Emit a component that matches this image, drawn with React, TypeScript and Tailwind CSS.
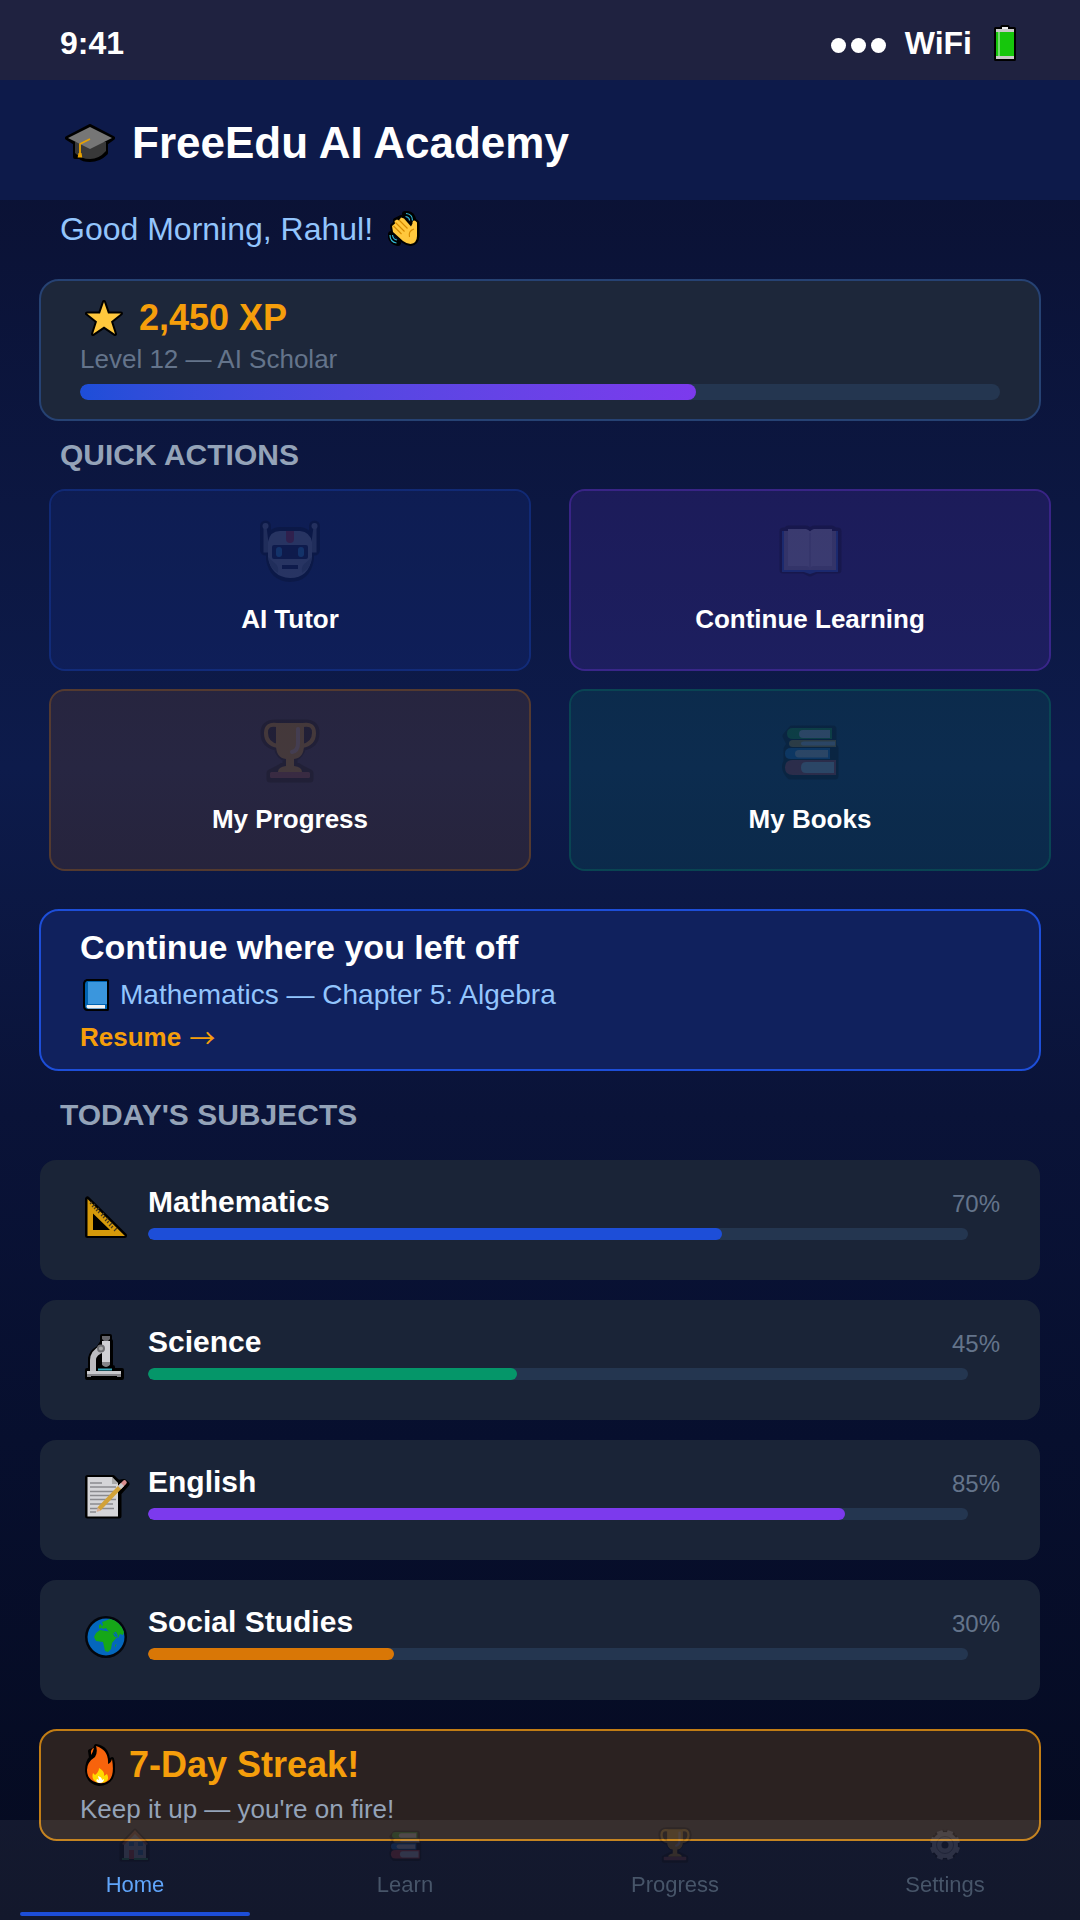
import React from "react";

type IconProps = { className?: string };

const OUT = { fill: "#000", stroke: "#000", strokeLinejoin: "round" as const };

function GraduationCap({ className }: IconProps) {
  return (
    <svg viewBox="0 0 50 38" className={className} aria-hidden="true">
      <path {...OUT} strokeWidth="4" d="M25 2 48 14 41 19V29Q34 36 25 36 18 36 15 33H10V19L2 14Z" />
      <path d="M10 18v11q6 6 15 6t16-8V18z" fill="#383838" />
      <path d="M25 3 47 14 25 25 3 14z" fill="#767676" />
      <path d="M25 15 15 20v11" fill="none" stroke="#e8a200" strokeWidth="1.8" />
      <path d="M13.500 29h3l.8 4.500h-4.600z" fill="#e8a200" />
    </svg>
  );
}

function WavingHand({ className }: IconProps) {
  const hand =
    "M4 15 7 12.500 6.500 10 9 8.500 11 9.500 13 6.500 16 7.500 23 15.500 24.500 12.500V11Q26 8 29 11.500V25Q29 32 22.500 33 19 33 15 30L5 21Z";
  return (
    <svg viewBox="0 0 34 36" className={className} aria-hidden="true">
      <path {...OUT} strokeWidth="4" d="M4 15 7 12 7 9 9 8 13 6 16 7 22 14 25 11Q28 9 29.500 12V25Q29 32 22.500 33 19 33 15 30L5 21Z" />
      <path d="M17 3Q24 2 25.500 10M3 23Q2 30 10 32" fill="none" stroke="#000" strokeWidth="6" strokeLinecap="round" />
      <path d={hand} fill="#ffc83d" />
      <path d="m5.500 15 8 8M7.500 11.500l9 9M11 9l8.500 8.500M26 18q-6 2-4.500 8" fill="none" stroke="#d68a00" strokeWidth="1.1" />
      <path d="M18 2.500q6.500.5 6.500 7M17.500 5.500q4 .5 4 4M2 24q0 7 6.500 8M4.500 24q.5 4.500 4.500 5" fill="none" stroke="#32b8d4" strokeWidth="1.200" />
    </svg>
  );
}

function Battery({ className }: IconProps) {
  return (
    <svg viewBox="0 0 22 36" className={className} aria-hidden="true">
      <path {...OUT} strokeWidth="3" d="M7 3.500 8 1.500h6l1 2h5.500v31h-19v-31z" />
      <path d="M8 2h6v3H8z" fill="#eee" />
      <rect x="2" y="4" width="18" height="30" fill="#c8c8c8" />
      <rect x="2" y="7" width="18" height="24" fill="#16c60c" />
      <path d="M4 7h2v24H4z" fill="#74dc6e" />
    </svg>
  );
}

function Star({ className }: IconProps) {
  const d = "M19 2 23 13.500H36L26 21.500 30 34 19 26.500 8 34 12 21.500 2 13.500H15Z";
  return (
    <svg viewBox="0 0 38 37" className={className} aria-hidden="true">
      <path {...OUT} strokeWidth="4" d={d} />
      <path d={d} fill="#ffc83d" />
    </svg>
  );
}

function Robot({ className }: IconProps) {
  return (
    <svg viewBox="0 0 64 64" className={className} aria-hidden="true">
      <path {...OUT} strokeWidth="8" d="M12 30V23Q13 12 22 12H42Q51 13 52 23V40Q49 59 32 59 15 58 12 40Z" />
      <path d="M7.500 7v24M56.500 7v24" stroke="#000" strokeWidth="11" strokeLinecap="round" />
      <path d="M7 8 10 32H7zM57 8l-3 24h3z" fill="#888" stroke="#888" strokeWidth="3" />
      <circle cx="7.500" cy="7" r="3" fill="#a0a0a0" />
      <circle cx="56.500" cy="7" r="3" fill="#a0a0a0" />
      <path d="M10 23Q12 12 22 12H42Q52 13 54 23V38Q51 59 32 59 13 58 10 38Z" fill="#b4b4b4" />
      <path d="M10 38q3 3 8 7 3 3 2 9Q11 49 10 38zM54 38q-3 3-8 7-3 3-2 9 9-5 10-16z" fill="#888" />
      <path d="M28 12h8v8q0 4-4 4t-4-4z" fill="#e8312a" />
      <rect x="14" y="26" width="36" height="14" rx="2" fill="#101020" />
      <rect x="18" y="28" width="6" height="10" rx="3" fill="#32a8e4" />
      <rect x="40" y="28" width="6" height="10" rx="3" fill="#32a8e4" />
      <path d="M24 46h16v4H24z" fill="#101020" />
    </svg>
  );
}

function OpenBook({ className }: IconProps) {
  return (
    <svg viewBox="0 0 64 64" className={className} aria-hidden="true">
      <path {...OUT} strokeWidth="7" d="M5 12H8L10 10H28L32 12 36 10H54L57 12H60V51H38L32 54 26 51H5Z" />
      <path d="M4 12h56v41H38l-6 2-6-2H4z" fill="#1672d4" />
      <path d="M6 12h52v39H6z" fill="#b5b5b5" />
      <path d="M10 10h18q4 1 4 4 0-3 4-4h18v37H36q-4 0-4 4 0-4-4-4H10z" fill="#e2e2e2" />
      <path d="M32 14v37" stroke="#bbb" strokeWidth="1.500" />
    </svg>
  );
}

function Trophy({ className }: IconProps) {
  return (
    <svg viewBox="0 0 64 64" className={className} aria-hidden="true">
      <path {...OUT} strokeWidth="7" d="M18 4H46Q58 3 58 14 58 26 45 28 42 37 36 39V45L44 50 52 54V60H12V54L20 50 28 45V39Q21 37 19 28 6 26 6 14 6 4 18 4Z" />
      <path d="M19 6q-11-2-11 8 0 11 12 13M45 6q11-2 11 8 0 11-12 13" fill="none" stroke="#eba41c" strokeWidth="4" />
      <path d="M18 4h28v22q0 13-10 14v7q8 1 8 6H20q0-5 8-6v-7q-10-1-10-14z" fill="#eba41c" />
      <path d="M40 10v14q0 8-6 9" fill="none" stroke="#e8c8b0" strokeWidth="4" strokeLinecap="round" />
      <rect x="12" y="53" width="40" height="6" rx="1.500" fill="#a04848" />
    </svg>
  );
}

function Books({ className }: IconProps) {
  return (
    <svg viewBox="0 0 64 64" className={className} aria-hidden="true">
      <path {...OUT} strokeWidth="7" d="M14 10H55V27L57 29V57H12Q5 49 9 43V30L12 25 8 17Z" />
      <path d="M54 9H15q-6 0-6 5.500T15 20h39z" fill="#16a51a" />
      <path d="M58 21H15q-4 0-4 3.500t4 3.500h43z" fill="#d99a1e" />
      <path d="M52 29H13q-6 0-6 5.500T13 40h39z" fill="#1478d4" />
      <path d="M58 41H15q-8 0-8 7.500T15 56h43z" fill="#dd3737" />
      <path d="M52 11H25q-4 0-4 4t4 4h27z" fill="#d8d8e8" />
      <path d="M57 22.500H26q-3 0-3 2t3 2h31z" fill="#d8d8e8" />
      <path d="M50 31H21q-4 0-4 3.700t4 3.800h29z" fill="#d8d8e8" />
      <path d="M56 43H28q-5 0-5 5.500t5 5.500h28z" fill="#d8d8e8" />
    </svg>
  );
}

function BlueBook({ className }: IconProps) {
  return (
    <svg viewBox="0 0 26 32" className={className} aria-hidden="true">
      <path {...OUT} strokeWidth="3" d="M4 1.500H24.500V30.500H4Q1.500 30 1.500 27V4Q2 2 4 1.500Z" />
      <path d="M4 2h20v28H5q-3 0-3-3V5q0-2 2-3z" fill="#0063b1" />
      <path d="M5 3h19v22H5z" fill="#3a96dd" />
      <path d="M4 26h18v3.500H5Q2.500 28 4 26z" fill="#f2f2f2" />
    </svg>
  );
}

function SetSquare({ className }: IconProps) {
  return (
    <svg viewBox="0 0 48 48" className={className} aria-hidden="true">
      <path {...OUT} strokeWidth="5" d="M5.500 6V42.500H42.500Z" />
      <path d="M5.500 6v37H43zM11 20.500 28 37H11z" fill="#d69a0a" fillRule="evenodd" />
      <path d="m8 11 2-2m0 5 3-3m-1 5 2-2m0 4 3-3m-1 5 2-2m1 5 3-3m-1 5 2-2m0 5 3-3m-1 5 2-2m0 5 3-3m-1 5 2-2m1 5 3-3" stroke="#453820" strokeWidth="1.200" />
    </svg>
  );
}

function Microscope({ className }: IconProps) {
  return (
    <svg viewBox="0 0 48 48" className={className} aria-hidden="true">
      <path {...OUT} strokeWidth="4" d="M20 3H28V8H29V34H31V37H40V45H5V37H8V25Q9 19 16 15L20 9Z" />
      <path d="M19 12Q8 18 8 27v11h6V27q0-5 8-8z" fill="#bcbcc0" />
      <path d="M20 3h8v3l-2 2h-4l-2-2z" fill="#65656a" />
      <path d="M20 8h8v22q0 2-4 3-4-1-4-3z" fill="#d0d0d4" />
      <path d="M20 29h8v2q0 2-4 3-4-1-4-3z" fill="#848488" />
      <circle cx="19" cy="15.500" r="3" fill="#aaa" stroke="#707074" strokeWidth="2" />
      <path d="M16 35.500h14v2H16z" fill="#36a8bb" />
      <path d="M5 38h34v5H5z" fill="#c9c9cd" />
      <path d="M5 41h34v3h-4v-1H9v1H5z" fill="#85858a" />
    </svg>
  );
}

function Memo({ className }: IconProps) {
  return (
    <svg viewBox="0 0 48 48" className={className} aria-hidden="true">
      <path {...OUT} strokeWidth="5" d="M5.500 4.500H31L36 9.500 42 8.500 45 11 37 20V43H5.500Z" />
      <path d="M5.500 4H30l6 6v33.500H5.500z" fill="#d5d5d8" />
      <path d="M30 4v7h6z" fill="#aaa" />
      <path d="M8 10h12M8 14h26M8 18.500h24M8 22.500h22M8 26.500h26M8 31h23M8 35.500h24M8 39h6" stroke="#8a8a8e" strokeWidth="1.500" />
      <path d="M17 36 39 13" stroke="#d2a238" strokeWidth="4.500" />
      <path d="m39 13 3.500-3.500" stroke="#d98c8c" strokeWidth="4.500" strokeLinecap="round" />
      <path d="m37.500 14.500 3-3" stroke="#c9c9c9" strokeWidth="4.500" />
      <path d="m14.500 39 1.200-4.500 3.300 3.100z" fill="#d9ae91" />
    </svg>
  );
}

function Globe({ className }: IconProps) {
  return (
    <svg viewBox="0 0 48 48" className={className} aria-hidden="true">
      <circle cx="24" cy="24" r="21" fill="#04060c" />
      <circle cx="24" cy="24" r="18.500" fill="#0467bd" />
      <path d="M20 9l8-3q10 2 14 13l-1 3-3-1-2 4-3-4-3-1-3-1-3-4-3 1-2-2 2-2z" fill="#16a718" />
      <path d="M14 20l4-3 6 1 6 1 3 5h2l-5 6-1 6-3 3-3-1-2-9-7-1-2-4zM33 32l1.500-1-1 3.500zM17 12l2-1 1 3-2 2-1-1z" fill="#16a718" />
      <path d="M32 19l1 1 2 4 1-1-2-4zM39 23l2-1 1 3-1 2z" fill="#0467bd" />
    </svg>
  );
}

function Fire({ className }: IconProps) {
  return (
    <svg viewBox="0 0 30 42" className={className} aria-hidden="true">
      <path {...OUT} strokeWidth="4" d="M11 2Q23 4 23 18L27 15Q30 26 26 34 22 40 14 40 3 38 2 27 2 18 6 14L5 7 10 5Z" />
      <path d="M11 2q13 4 12 18 3-1 4-5 3 18-4 22-4 3-9 2Q2 37 2 26q0-8 8-13 3-5 1-11z" fill="#f7630c" />
      <path d="M6 11V7q1-3 3-3-1 4-3 7z" fill="#f7630c" />
      <path d="M14 24q6 3 5 8l3-2q3 6-2 8-4 2-9 0-5-3-3-9 1 1 2 2 4-3 4-7z" fill="#ffd800" />
      <path d="M13 32q4 1 4 4l2-1q0 4-5 4-4-1-2-4l2 1z" fill="#fff" />
    </svg>
  );
}

function House({ className }: IconProps) {
  return (
    <svg viewBox="0 0 36 36" className={className} aria-hidden="true">
      <path {...OUT} strokeWidth="3" d="M18 3 31 17V33H4V17Z" />
      <path d="M7 16 18 5l11 11v15H7z" fill="#a8a8b4" />
      <path d="M18 3 5 17l2 1L18 7l11 11 2-1z" fill="#b0562b" />
      <path d="M12 23h5v9h-5z" fill="#c93a32" />
      <path d="M12 15h5v4h-5zM21 15h5v4h-5zM21 23h5v5h-5z" fill="#2678ad" />
      <path d="M5 31h7v2H5zM17 31h14v2H17z" fill="#269650" />
    </svg>
  );
}

function Gear({ className }: IconProps) {
  return (
    <svg viewBox="0 0 36 36" className={className} aria-hidden="true">
      <g stroke="#000" strokeWidth="9">
        <path d="M12 4.500 24 31.500M24 4.500 12 31.500M4.500 12 31.500 24M4.500 24 31.500 12" />
      </g>
      <circle cx="18" cy="18" r="14" fill="#000" />
      <g stroke="#bcbcc8" strokeWidth="6">
        <path d="M12.500 4 23.500 32M23.500 4 12.500 32M4 12.500 32 23.500M4 23.500 32 12.500" />
      </g>
      <circle cx="18" cy="18" r="13" fill="#bcbcc8" />
      <circle cx="18" cy="18" r="8.500" fill="none" stroke="#60606c" strokeWidth="1" />
      <circle cx="18" cy="18" r="3.500" fill="#10101c" />
    </svg>
  );
}

const actions = [
  { label: "AI Tutor", Icon: Robot, tone: "bg-[#1d4ed8]/12 border-[#1d4ed8]/35" },
  { label: "Continue Learning", Icon: OpenBook, tone: "bg-[#7c3aed]/15 border-[#7c3aed]/40" },
  { label: "My Progress", Icon: Trophy, tone: "bg-[#d97706]/13 border-[#d97706]/35" },
  { label: "My Books", Icon: Books, tone: "bg-[#059669]/14 border-[#059669]/35" },
];

const subjects = [
  { name: "Mathematics", value: 70, Icon: SetSquare, color: "bg-[#1d4ed8]" },
  { name: "Science", value: 45, Icon: Microscope, color: "bg-[#059669]" },
  { name: "English", value: 85, Icon: Memo, color: "bg-[#7c3aed]" },
  { name: "Social Studies", value: 30, Icon: Globe, color: "bg-[#d97706]" },
];

const tabs = [
  { label: "Home", Icon: House, active: true },
  { label: "Learn", Icon: Books, active: false },
  { label: "Progress", Icon: Trophy, active: false },
  { label: "Settings", Icon: Gear, active: false },
];

function Bar({ value, label, size, fill }: { value: number; label: string; size: string; fill: string }) {
  return (
    <div
      role="progressbar"
      aria-label={label}
      aria-valuenow={value}
      aria-valuemin={0}
      aria-valuemax={100}
      className={`overflow-hidden rounded-full bg-[#243650] ${size}`}
    >
      <div className={`h-full rounded-full ${fill}`} style={{ width: `${value}%` }} />
    </div>
  );
}

export default function App() {
  return (
    <div className="min-h-screen bg-[linear-gradient(180deg,#0a0f2e_0%,#0d1b4b_40%,#0a1338_58%,#070f2e_75%,#050a1f_100%)] pb-16 font-['Liberation_Sans',Arial,sans-serif] text-white">
      <div className="flex h-20 items-center justify-between bg-[#1f2240] px-[60px] pt-1.5 text-[32px] font-bold">
        <span>9:41</span>
        <div className="flex items-center">
          <span className="mr-[19px] flex gap-[5px] pt-1" aria-label="Signal">
            <i className="size-[15px] rounded-full bg-white" />
            <i className="size-[15px] rounded-full bg-white" />
            <i className="size-[15px] rounded-full bg-white" />
          </span>
          <span>WiFi</span>
          <Battery className="mr-1 ml-[22px] h-9 w-[22px]" />
        </div>
      </div>

      <header className="flex h-[120px] items-center bg-[#0d1a4a] px-[60px] pt-1.5">
        <GraduationCap className="mr-[17px] ml-[5px] h-[38px] w-[50px]" />
        <h1 className="text-[44px] leading-[52px] font-bold">FreeEdu AI Academy</h1>
      </header>

      <main>
        <p className="flex items-center px-[60px] pt-2 text-[32px] leading-[42px] text-[#93c5fd]">
          Good Morning, Rahul!
          <WavingHand className="ml-[15px] h-9 w-[34px]" />
        </p>

        <section className="mx-[39px] mt-[29px] rounded-[20px] border-2 border-[#264273] bg-[#1d273a] px-[39px] pt-[17px] pb-[19px]">
          <p className="flex items-center text-4xl leading-10 font-bold text-[#f59e0b]">
            <Star className="mr-4 ml-[5px] h-[37px] w-[38px]" />
            2,450 XP
          </p>
          <p className="mt-[5px] mb-[9px] text-[26px] leading-8 text-[#64748b]">Level 12 — AI Scholar</p>
          <Bar value={67} label="Level progress" size="h-4" fill="bg-linear-to-r from-[#1d4ed8] to-[#7c3aed]" />
        </section>

        <h2 className="mt-3.5 px-[60px] text-[30px] leading-10 font-bold text-[#94a3b8]">QUICK ACTIONS</h2>
        <div className="mt-3.5 mr-[29px] ml-[49px] grid grid-cols-2 gap-x-[38px] gap-y-[18px]">
          {actions.map(({ label, Icon, tone }) => (
            <button
              key={label}
              type="button"
              className={`flex flex-col items-center rounded-2xl border-2 bg-clip-padding pt-7 pb-[34px] ${tone}`}
            >
              <Icon className="size-16 opacity-15" />
              <span className="mt-5 text-[26px] leading-8 font-bold">{label}</span>
            </button>
          ))}
        </div>

        <section className="mx-[39px] mt-[38px] rounded-[20px] border-2 border-[#1d4ed8] bg-[#10215d] px-[39px] py-4">
          <h2 className="text-[34px] leading-10 font-bold">Continue where you left off</h2>
          <p className="mt-3 flex items-center text-[28px] leading-8 text-[#93c5fd]">
            <BlueBook className="mr-[11px] ml-[3px] h-8 w-[26px]" />
            Mathematics — Chapter 5: Algebra
          </p>
          <a href="#resume" className="mt-2.5 flex items-center gap-2 text-[26px] leading-8 font-bold text-[#f59e0b]">
            Resume <span className="font-['Noto_Sans_CJK_JP',sans-serif] font-normal">→</span>
          </a>
        </section>

        <h2 className="mt-6 px-[60px] text-[30px] leading-10 font-bold text-[#94a3b8]">TODAY'S SUBJECTS</h2>
        <ul className="mx-10 mt-[25px] flex flex-col gap-5">
          {subjects.map(({ name, value, Icon, color }) => (
            <li key={name} className="flex rounded-2xl bg-[#1a2437] px-10 pt-[26px] pb-10">
              <Icon className="mt-[7px] mr-[18px] -mb-2 ml-[2px] size-12" />
              <div className="flex-1">
                <div className="flex h-8 items-baseline justify-between">
                  <h3 className="text-[30px] leading-8 font-bold">{name}</h3>
                  <span className="text-2xl leading-8 text-[#64748b]">{value}%</span>
                </div>
                <Bar value={value} label={name} size="mt-2.5 mr-8 h-3" fill={color} />
              </div>
            </li>
          ))}
        </ul>

        <section className="mx-[39px] mt-[29px] rounded-[18px] border-2 border-[#c27d14] bg-[#2b2221] px-[39px] py-3.5">
          <h2 className="flex items-center text-4xl leading-10 font-bold text-[#f59e0b]">
            <Fire className="-my-1 mr-[14px] ml-[5px] h-[42px] w-[30px]" />
            7-Day Streak!
          </h2>
          <p className="mt-2 text-[26px] leading-8 text-[#94a3b8]">Keep it up — you're on fire!</p>
        </section>
      </main>

      <nav className="fixed inset-x-0 bottom-0 grid h-[100px] grid-cols-4 bg-white/6">
        {tabs.map(({ label, Icon, active }) => (
          <button
            key={label}
            type="button"
            aria-current={active ? "page" : undefined}
            className={`relative flex flex-col items-center pt-[7px] text-[22px] leading-7 ${active ? "text-[#60a5fa]" : "text-[#475569]"}`}
          >
            <Icon className="mb-2 size-9 opacity-15" />
            {label}
            {active && <span className="absolute inset-x-5 bottom-1 h-1 rounded-sm bg-[#1d4ed8]" />}
          </button>
        ))}
      </nav>
    </div>
  );
}
